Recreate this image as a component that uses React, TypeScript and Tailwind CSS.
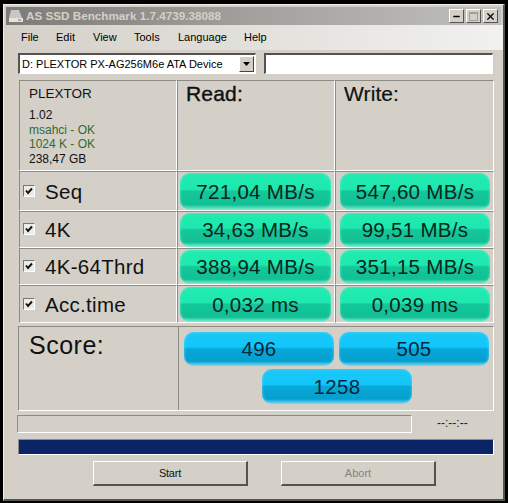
import { Minus, X } from 'lucide-react';

const FONT = "font-['Liberation_Sans',Arial,sans-serif]";

function Pill({ text, blue, className }: { text: string; blue?: boolean; className: string }) {
  return (
    <div
      className={`flex items-center justify-center rounded-[10px] pt-[1px] text-[20.5px] tracking-[0.3px] ${
        blue
          ? 'bg-[linear-gradient(to_bottom,#1ac8f8_0%,#12c6fa_44%,#07a8d8_50%,#059fce_86%,#7fdcf8_100%)] text-[#06283a] shadow-[inset_0_0_3px_#5fd8fa]'
          : 'bg-[linear-gradient(to_bottom,#22ebb2_0%,#1fe8ae_44%,#14c79a_50%,#11c094_86%,#86f0d4_100%)] text-[#08261c] shadow-[inset_0_0_3px_#5cefc8]'
      } ${className}`}
    >
      {text}
    </div>
  );
}

function Check() {
  return (
    <div className="-mt-[1px] h-[12px] w-[12px] border-t border-l border-t-[#777] border-l-[#777] border-r border-b border-r-white border-b-white bg-[#ecebe7]">
      <svg viewBox="0 0 10 10" className="h-[10px] w-[10px]">
        <path d="M2 4.5 L4 7 L8 2.5" fill="none" stroke="#111" strokeWidth="1.9" />
      </svg>
    </div>
  );
}

const cell = 'border-t border-l border-t-[#8e8b85] border-l-[#8e8b85] border-r border-b border-r-white border-b-white';

const rows = [
  { name: 'Seq', read: '721,04 MB/s', write: '547,60 MB/s', h: 'h-[40px]', pill: 'h-[37px]' },
  { name: '4K', read: '34,63 MB/s', write: '99,51 MB/s', h: 'h-[37px]', pill: 'h-[34px]' },
  { name: '4K-64Thrd', read: '388,94 MB/s', write: '351,15 MB/s', h: 'h-[37px]', pill: 'h-[34px]' },
  { name: 'Acc.time', read: '0,032 ms', write: '0,039 ms', h: 'h-[38px]', pill: 'h-[35px]' },
];

export default function App() {
  return (
    <div className={`h-[503px] w-[508px] bg-black pt-[4px] pl-[3px] ${FONT}`}>
      <div className="h-[497px] w-[502px] border-r-2 border-b-2 border-r-[#55534f] border-b-[#55534f] border-l border-t border-l-[#f0efe9] border-t-[#f0efe9] bg-[#d4d0c8] pl-[2px] pt-[2px]">
        {/* title bar */}
        <div className="flex h-[18px] w-[495px] items-center bg-[linear-gradient(to_right,#7d7b77,#a3a19e_50%,#c0c0c0)] pl-[2px] pr-[3px]">
          <svg viewBox="0 0 16 14" className="h-[14px] w-[16px]">
            <path d="M3 1 H11 L14 9 H1 Z" fill="#c9c7c2" />
            <path d="M1 9 H15 V13 H1 Z" fill="#e4e3df" />
            <path d="M10 11 H13" stroke="#77756f" />
          </svg>
          <span className="ml-[2px] flex-1 text-[11.7px] font-bold text-[#d4d0c8]">AS SSD Benchmark 1.7.4739.38088</span>
          <div className="mr-[2px] flex h-[14px] w-[15px] items-end justify-center border-r border-b border-r-[#555] border-b-[#555] border-t border-l border-t-white border-l-white bg-[#d4d0c8] pb-[1px]">
            <Minus size={9} strokeWidth={4} className="text-black" />
          </div>
          <div className="mr-[2px] flex h-[14px] w-[15px] items-center justify-center border-r border-b border-r-[#555] border-b-[#555] border-t border-l border-t-white border-l-white bg-[#d4d0c8]">
            <div className="h-[9px] w-[9px] border border-t-2 border-[#a09e98]" />
          </div>
          <div className="flex h-[14px] w-[15px] items-center justify-center border-r border-b border-r-[#555] border-b-[#555] border-t border-l border-t-white border-l-white bg-[#d4d0c8]">
            <X size={11} strokeWidth={2.6} className="text-black" />
          </div>
        </div>

        {/* menu */}
        <div className="flex h-[25px] w-[497px] items-center bg-[linear-gradient(to_right,#d4d0c8,#f1f1ef)] pl-[15px] text-[11px] text-black">
          <span className="w-[35px]">File</span>
          <span className="w-[37px]">Edit</span>
          <span className="w-[41px]">View</span>
          <span className="w-[44px]">Tools</span>
          <span className="w-[66px]">Language</span>
          <span>Help</span>
        </div>

        {/* drive select */}
        <div className="mt-[3px] flex h-[21px] pl-[12px]">
          <div className="flex w-[238px] items-center justify-between border-t-2 border-l-2 border-t-[#55534f] border-l-[#55534f] border-r border-b border-r-white border-b-white bg-white pl-[2px] pr-[1px] text-[11px] text-black">
            <span>D: PLEXTOR PX-AG256M6e ATA Device</span>
            <div className="flex h-[16px] w-[15px] items-center justify-center border-t border-l border-t-white border-l-white border-r border-b border-r-[#444] border-b-[#444] bg-[#d4d0c8]">
              <svg viewBox="0 0 7 4" className="h-[4px] w-[7px]">
                <path d="M0 0 H7 L3.5 4 Z" fill="#000" />
              </svg>
            </div>
          </div>
          <div className="ml-[8px] w-[229px] border-t-2 border-l-2 border-t-[#55534f] border-l-[#55534f] border-r border-b border-r-white border-b-white bg-white" />
        </div>

        {/* results */}
        <div className="mt-[6px] ml-[13px] grid w-[475px] grid-cols-[158px_158px_159px]">
          <div className={`${cell} h-[91px] pl-[9px] pt-[4px] text-[#111]`}>
            <div className="text-[13.5px] leading-[17px]">PLEXTOR</div>
            <div className="mt-[6px] text-[12px] leading-[14.7px]">1.02</div>
            <div className="text-[12px] leading-[14.7px] text-[#2f6b2f]">msahci - OK</div>
            <div className="text-[12px] leading-[14.7px] text-[#2f6b2f]">1024 K - OK</div>
            <div className="text-[12px] leading-[14.7px]">238,47 GB</div>
          </div>
          <div className={`${cell} h-[91px] pl-[8px] pt-[1px] text-[21px] leading-[24px] tracking-[0.2px] text-[#111] [-webkit-text-stroke:0.4px_#111]`}>Read:</div>
          <div className={`${cell} h-[91px] pl-[8px] pt-[1px] text-[21px] leading-[24px] tracking-[0.1px] text-[#111] [-webkit-text-stroke:0.2px_#111]`}>Write:</div>

          {rows.map((row) => (
            <div key={row.name} className="contents">
              <div className={`${cell} ${row.h} flex items-center gap-[10px] pl-[3px] text-[20.5px] tracking-[0.3px] text-[#111]`}>
                <Check />
                <span className="pt-[2px]">{row.name}</span>
              </div>
              <div className={`${cell} ${row.h} pl-[2px] pt-[1px]`}>
                <Pill text={row.read} className={`${row.pill} w-[151px]`} />
              </div>
              <div className={`${cell} ${row.h} pl-[4px] pt-[1px]`}>
                <Pill text={row.write} className={`${row.pill} w-[150px]`} />
              </div>
            </div>
          ))}
        </div>

        {/* score */}
        <div className={`${cell} mt-[3px] ml-[12px] flex h-[85px] w-[476px]`}>
          <div className="w-[160px] border-r border-r-[#8e8b85] pl-[10px] pt-[1px] text-[25px] leading-[34px] tracking-[0.5px] text-[#111]">Score:</div>
          <div className="flex flex-col pl-[5px] pt-[5px]">
            <div className="flex gap-[5px]">
              <Pill blue text="496" className="h-[34px] w-[150px]" />
              <Pill blue text="505" className="h-[34px] w-[150px]" />
            </div>
            <Pill blue text="1258" className="mt-[3px] ml-[78px] h-[35px] w-[150px]" />
          </div>
        </div>

        {/* progress + time */}
        <div className="mt-[4px] ml-[11px] flex h-[18px] items-center">
          <div className={`${cell} h-[18px] w-[395px]`} />
          <span className="ml-[25px] -translate-y-[1px] text-[12px] text-[#222]">--:--:--</span>
        </div>
        <div className="mt-[6px] ml-[12px] h-[16px] w-[476px] border-t border-l border-t-[#8e8b85] border-l-[#8e8b85] border-r border-b border-r-white border-b-white bg-[#0a2466]" />

        {/* buttons */}
        <div className="mt-[6px] ml-[87px] flex gap-[33px]">
          <div className="flex h-[25px] w-[155px] items-center justify-center border-t border-l border-t-white border-l-white border-r-2 border-b-2 border-r-[#55534f] border-b-[#55534f] text-[11px] tracking-[-0.2px] text-[#111]">Start</div>
          <div className="flex h-[25px] w-[155px] items-center justify-center border-t border-l border-t-white border-l-white border-r-2 border-b-2 border-r-[#55534f] border-b-[#55534f] text-[11px] text-[#85837e]">Abort</div>
        </div>
      </div>
    </div>
  );
}
